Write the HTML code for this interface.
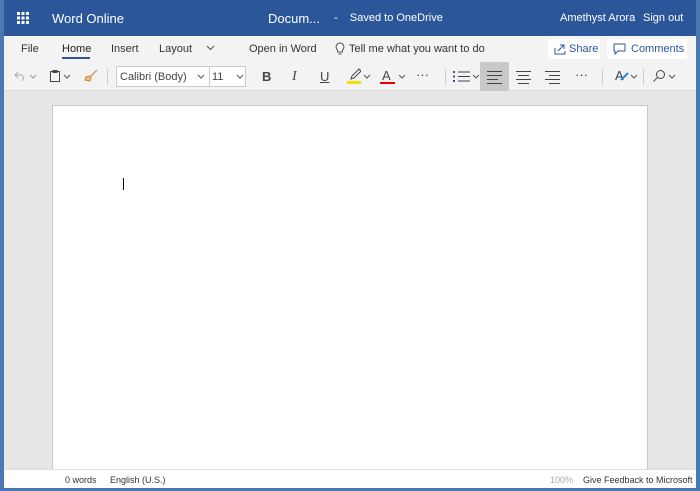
<!DOCTYPE html><html><head><style>
*{margin:0;padding:0;box-sizing:border-box}
body{width:700px;height:491px;overflow:hidden;font-family:"Liberation Sans",sans-serif;background:#4a78b0;position:relative}
.win{position:absolute;left:4px;top:0;right:4px;bottom:3px;background:#e6e6e6;overflow:hidden}
.hdr{position:absolute;left:0;top:0;right:0;height:36px;background:#2b579a;color:#fff;font-size:13px}
.hdr span{position:absolute;top:11px}
.tabs{position:absolute;left:0;top:36px;right:0;height:26px;background:#f3f3f3;font-size:11px;color:#333}
.tabs span{position:absolute;top:7px}
.tb{position:absolute;left:0;top:62px;right:0;height:29px;background:#f3f3f3;border-bottom:1px solid #d8d8d8;font-size:11px;color:#444}
.tb .a{position:absolute}
.page{position:absolute;left:48px;top:105px;width:596px;height:370px;background:#fff;border:1px solid #c8c8c8}
.status{position:absolute;left:0;right:0;top:469px;height:19px;background:#fff;border-top:1px solid #ddd;font-size:9px;color:#333}
.status span{position:absolute;top:5px}
.sep{position:absolute;top:7px;width:1px;height:16px;background:#ccc}
.lines i{display:block;height:1px;background:#444;margin-bottom:3px}
.cv{position:absolute;top:12px}
</style></head><body><div class="win">
<div class="hdr">
<svg style="position:absolute;left:13px;top:12px" width="12" height="12"><g fill="#fff"><rect x="0" y="0" width="3" height="3"/><rect x="4.5" y="0" width="3" height="3"/><rect x="9" y="0" width="3" height="3"/><rect x="0" y="4.5" width="3" height="3"/><rect x="4.5" y="4.5" width="3" height="3"/><rect x="9" y="4.5" width="3" height="3"/><rect x="0" y="9" width="3" height="3"/><rect x="4.5" y="9" width="3" height="3"/><rect x="9" y="9" width="3" height="3"/></g></svg>
<span style="left:48px">Word Online</span>
<span style="left:264px">Docum...</span>
<span style="left:330px;font-size:11px;top:12px">-&nbsp;&nbsp;&nbsp; Saved to OneDrive</span>
<span style="left:556px;font-size:11px;top:12px">Amethyst Arora</span>
<span style="left:639px;font-size:11px;top:12px">Sign out</span>
</div>
<div class="tabs">
<span style="left:17px">File</span>
<span style="left:58px;color:#222">Home</span>
<div style="position:absolute;left:58px;top:21px;width:28px;height:2px;background:#2b579a"></div>
<span style="left:107px">Insert</span>
<span style="left:155px">Layout</span>
<svg style="position:absolute;left:202px;top:9px" width="9" height="6"><path d="M1 1l3.5 3.5L8 1" stroke="#555" fill="none"/></svg>
<span style="left:245px">Open in Word</span>
<svg style="position:absolute;left:331px;top:6px" width="10" height="14"><path d="M5 1a4 4 0 0 0-2.5 7V10h5V8A4 4 0 0 0 5 1zM3.5 12h3" stroke="#555" fill="none"/></svg>
<span style="left:345px">Tell me what you want to do</span>
<div style="position:absolute;left:544px;top:3px;width:52px;height:20px;background:#fff"></div>
<svg style="position:absolute;left:550px;top:7px" width="12" height="12"><path d="M1 5v6h10V8M4 8l6-6M6 2h4v4" stroke="#2b579a" fill="none"/></svg>
<span style="left:565px;color:#2b579a">Share</span>
<div style="position:absolute;left:603px;top:3px;width:80px;height:20px;background:#fff"></div>
<svg style="position:absolute;left:609px;top:7px" width="13" height="12"><path d="M1 1h11v7H5l-3 3V8H1z" stroke="#2b579a" fill="none"/></svg>
<span style="left:627px;color:#2b579a">Comments</span>
</div>
<div class="tb">
<svg class="a" style="left:10px;top:8px" width="14" height="12"><path d="M4 2L1 5l3 3M1 5h7a4 4 0 0 1 0 6" stroke="#aaa" fill="none"/></svg>
<svg class="a cv" style="left:25px" width="8" height="5"><path d="M1 1l3 3 3-3" stroke="#999" fill="none"/></svg>
<svg class="a" style="left:45px;top:7px" width="12" height="14"><path d="M1.5 2.5h9v10h-9zM4 1.5h4v2H4z" stroke="#444" fill="none"/></svg>
<svg class="a cv" style="left:59px" width="8" height="5"><path d="M1 1l3 3 3-3" stroke="#555" fill="none"/></svg>
<svg class="a" style="left:80px;top:7px" width="14" height="14"><path d="M13 1L7 7M2 8l4-1 1 1-1 4-5-1z" stroke="#d08030" fill="#f0c090"/></svg>
<div class="sep" style="left:103px"></div>
<div class="a" style="left:112px;top:4px;width:130px;height:21px;background:#fff;border:1px solid #ccc"></div>
<div class="a" style="left:205px;top:4px;width:1px;height:21px;background:#ccc"></div>
<span class="a" style="left:116px;top:9px">Calibri (Body)</span>
<svg class="a cv" style="left:193px" width="8" height="5"><path d="M1 1l3 3 3-3" stroke="#555" fill="none"/></svg>
<span class="a" style="left:208px;top:9px">11</span>
<svg class="a cv" style="left:232px" width="8" height="5"><path d="M1 1l3 3 3-3" stroke="#555" fill="none"/></svg>
<span class="a" style="left:258px;top:7px;font-weight:bold;font-size:13px">B</span>
<span class="a" style="left:288px;top:7px;font-style:italic;font-family:'Liberation Serif';font-size:14px">I</span>
<span class="a" style="left:316px;top:7px;text-decoration:underline;font-size:13px">U</span>
<div class="a" style="left:343px;top:19px;width:14px;height:3px;background:#f0e000"></div>
<svg class="a" style="left:345px;top:6px" width="12" height="12"><path d="M10 1L3 8l-1 3 3-1 7-7z" stroke="#444" fill="none"/></svg>
<svg class="a cv" style="left:359px" width="8" height="5"><path d="M1 1l3 3 3-3" stroke="#555" fill="none"/></svg>
<span class="a" style="left:378px;top:6px;font-size:13px">A</span>
<div class="a" style="left:376px;top:20px;width:15px;height:2px;background:#e00"></div>
<svg class="a cv" style="left:394px" width="8" height="5"><path d="M1 1l3 3 3-3" stroke="#555" fill="none"/></svg>
<span class="a" style="left:412px;top:5px;font-size:13px">&middot;&middot;&middot;</span>
<div class="sep" style="left:441px"></div>
<svg class="a" style="left:449px;top:8px" width="18" height="13"><g fill="#2b579a"><rect x="0" y="1" width="2" height="2"/><rect x="0" y="5.5" width="2" height="2"/><rect x="0" y="10" width="2" height="2"/></g><path d="M5 2h12M5 6.5h12M5 11h12" stroke="#444"/></svg>
<svg class="a cv" style="left:468px" width="8" height="5"><path d="M1 1l3 3 3-3" stroke="#555" fill="none"/></svg>
<div class="a" style="left:476px;top:0;width:29px;height:29px;background:#c8c8c8"></div>
<div class="a lines" style="left:483px;top:9px;width:15px"><i></i><i></i><i style="width:11px"></i><i></i></div>
<div class="a lines" style="left:512px;top:9px;width:15px"><i></i><i style="margin:0 2px 3px"></i><i></i><i style="margin:0 2px"></i></div>
<div class="a lines" style="left:541px;top:9px;width:15px"><i></i><i style="margin-left:4px;margin-bottom:3px"></i><i></i><i style="margin-left:4px"></i></div>
<span class="a" style="left:571px;top:5px;font-size:13px">&middot;&middot;&middot;</span>
<div class="sep" style="left:598px"></div>
<span class="a" style="left:611px;top:6px;font-size:13px">A</span>
<svg class="a" style="left:613px;top:10px" width="12" height="12"><path d="M11 1L4 8" stroke="#2b8ad0" stroke-width="2"/></svg>
<svg class="a cv" style="left:626px" width="8" height="5"><path d="M1 1l3 3 3-3" stroke="#555" fill="none"/></svg>
<div class="sep" style="left:639px"></div>
<svg class="a" style="left:648px;top:7px" width="14" height="14"><circle cx="8.5" cy="5.5" r="4" stroke="#444" fill="none"/><path d="M6 8L1.5 12.5" stroke="#444"/></svg>
<svg class="a cv" style="left:664px" width="8" height="5"><path d="M1 1l3 3 3-3" stroke="#555" fill="none"/></svg>
</div>
<div class="page"><div style="position:absolute;left:70px;top:72px;width:1px;height:12px;background:#000"></div></div>
<div class="status">
<span style="left:61px">0 words</span>
<span style="left:106px">English (U.S.)</span>
<span style="left:546px;color:#aaa">100%</span>
<span style="left:579px">Give Feedback to Microsoft</span>
</div>
</div></body></html>
